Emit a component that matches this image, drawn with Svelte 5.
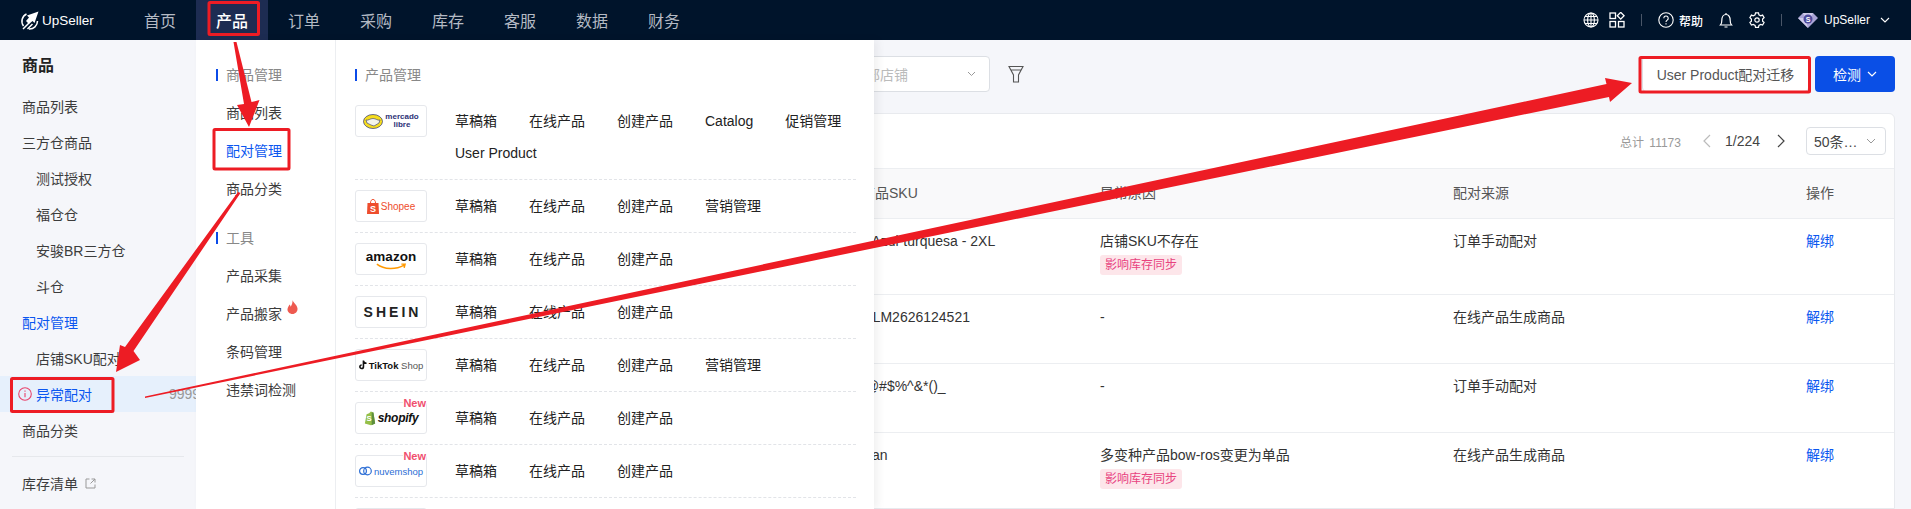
<script>
	const nav = ["首页", "产品", "订单", "采购", "库存", "客服", "数据", "财务"];

	const side = [
		{ label: "商品列表" },
		{ label: "三方仓商品" },
		{ label: "测试授权", sub: true },
		{ label: "福仓仓", sub: true },
		{ label: "安骏BR三方仓", sub: true },
		{ label: "斗仓", sub: true },
		{ label: "配对管理", blue: true },
		{ label: "店铺SKU配对", sub: true },
		{ label: "异常配对", sub: true, active: true },
		{ label: "商品分类" }
	];

	const base = ["草稿箱", "在线产品", "创建产品"];
	const platforms = [
		{ id: "mercado", links: [...base, "Catalog", "促销管理", "User Product"] },
		{ id: "shopee", links: [...base, "营销管理"] },
		{ id: "amazon", links: base },
		{ id: "shein", links: base },
		{ id: "tiktok", links: [...base, "营销管理"] },
		{ id: "shopify", links: base, isNew: true },
		{ id: "nuvem", links: base, isNew: true },
		{ id: "more", links: [] }
	];

	const rows = [
		{ sku: "t^Azul-turquesa - 2XL", reason: "店铺SKU不存在", tag: true, source: "订单手动配对" },
		{ sku: "MLM2626124521", reason: "-", source: "在线产品生成商品" },
		{ sku: "!@#$%^&*()_", reason: "-", source: "订单手动配对" },
		{ sku: "Ivan", reason: "多变种产品bow-ros变更为单品", tag: true, source: "在线产品生成商品" }
	];
</script>

<div class="page">
	<header class="topbar">
		<div class="logo">
			<svg width="19" height="19" viewBox="0 0 19 19" fill="none" stroke="#fff">
				<path d="M6.500 3A8 8 0 0 0 3.500 15" stroke-width="1.500" />
				<path d="M9 18a8 8 0 0 0 8.500-8" stroke-width="1.500" />
				<path d="M18.500 .5 7 4.500l2 2-3 3.500 3 3 3.500-3 2 2z" fill="#fff" stroke="none" />
				<path d="M3 18l6-6M7.500 18l5-5" stroke-width="1.500" />
			</svg>
			<span>UpSeller</span>
		</div>
		<nav>
			{#each nav as item, i}
				<div class="nav-item" class:on={i === 1}>{item}</div>
			{/each}
		</nav>
		<div class="tools">
			<svg class="ico" viewBox="0 0 16 16" fill="none" stroke="#fff" stroke-width="1.100">
				<circle cx="8" cy="8" r="7" />
				<ellipse cx="8" cy="8" rx="3.400" ry="7" />
				<path d="M8 1v14M1 8h14M2 4.500h12M2 11.500h12" />
			</svg>
			<svg class="ico apps" viewBox="0 0 16 16" fill="none" stroke="#fff" stroke-width="1.300">
				<rect x="1" y="1" width="5.500" height="5.500" />
				<rect x="1" y="9.500" width="5.500" height="5.500" />
				<rect x="9.500" y="9.500" width="5.500" height="5.500" />
				<rect x="9.300" y="1.300" width="4.800" height="4.800" transform="rotate(45 11.700 3.700)" />
			</svg>
			<i class="sep"></i>
			<svg class="ico" viewBox="0 0 16 16" fill="none" stroke="#fff" stroke-width="1.100">
				<circle cx="8" cy="8" r="7.200" />
				<path d="M5.800 6.200a2.200 2.200 0 1 1 3.400 1.900c-.8.500-1.200 1-1.200 1.900M8 11.300v1.200" />
			</svg>
			<span class="help">帮助</span>
			<svg class="ico bell" viewBox="0 0 16 16" fill="none" stroke="#fff" stroke-width="1.200">
				<path d="M2.500 13c1-1 1.300-2 1.300-4.500C3.800 5 5.500 2.500 8 2.500s4.200 2.500 4.200 6c0 2.500.3 3.500 1.300 4.500zM6.500 15h3M8 1v1.500" />
			</svg>
			<svg class="ico gear" viewBox="0 0 16 16" fill="none" stroke="#fff" stroke-width="1.200">
				<path d="M6.500 1.200h3l.4 2 1.800 1 1.900-.7 1.500 2.600-1.500 1.300v2.200l1.500 1.300-1.500 2.600-1.900-.7-1.800 1-.4 2h-3l-.4-2-1.800-1-1.900.7-1.500-2.600 1.500-1.300V7.400L.9 6.100l1.500-2.600 1.900.7 1.800-1z" transform="translate(0 -.4)" />
				<circle cx="8" cy="8" r="2.200" />
			</svg>
			<i class="sep second"></i>
			<svg class="gem" width="20" height="16" viewBox="0 0 20 16">
				<path d="M5 1h10l5 5-10 10L0 6z" fill="#a9a4d6" />
				<path d="M5 1h10l-2 5H7zM0 6h7l3 10z" fill="#cfcbea" />
				<circle cx="10" cy="7" r="4.500" fill="#4d4a9c" />
				<text x="10" y="9.500" class="gem-s">S</text>
			</svg>
			<span class="user">UpSeller</span>
			<svg class="chev" width="10" height="6" viewBox="0 0 10 6" fill="none" stroke="#fff" stroke-width="1.100"><path d="M1 1l4 4 4-4" /></svg>
		</div>
	</header>

	<div class="body">
		<aside class="sidebar">
			<div class="side-title">商品</div>
			{#each side as item}
				<div class="side-item" class:sub={item.sub} class:blue={item.blue} class:active={item.active}>
					{#if item.active}
						<svg class="info" width="14" height="14" viewBox="0 0 14 14" fill="none" stroke="#e8436b" stroke-width="1.100">
							<circle cx="7" cy="7" r="6.300" />
							<path d="M7 6v4.300M7 3.500v1.200" />
						</svg>
					{/if}
					<span>{item.label}</span>
					{#if item.active}<span class="count">9999+</span>{/if}
				</div>
			{/each}
			<div class="side-rule"></div>
			<div class="side-item stock">
				<span>库存清单</span>
				<svg width="11" height="11" viewBox="0 0 11 11" fill="none" stroke="#999" stroke-width="1"><path d="M4.500 1H1v9h9V6.500M6.500 1H10v3.500M10 1 5.500 5.500" /></svg>
			</div>
		</aside>

		<main class="main">
			<div class="toolbar">
				<div class="filters">
					<div class="select">
						<span>全部店铺</span>
						<svg width="9" height="6" viewBox="0 0 9 6" fill="none" stroke="#999" stroke-width="1"><path d="M1 1l3.500 3.500L8 1" /></svg>
					</div>
				</div>
				<svg class="funnel" width="16" height="18" viewBox="0 0 16 18" fill="none" stroke="#555" stroke-width="1.100">
					<path d="M1 1.500h14l-4.500 8.500v7h-5v-7zM3 5h10" />
				</svg>
				<button class="btn plain">User Product配对迁移</button>
				<button class="btn primary">
					检测
					<svg width="10" height="6" viewBox="0 0 10 6" fill="none" stroke="#fff" stroke-width="1.200"><path d="M1 1l4 4 4-4" /></svg>
				</button>
			</div>

			<section class="card">
				<div class="pager">
					<span class="total">总计 11173</span>
					<svg class="arrow" width="8" height="14" viewBox="0 0 8 14" fill="none" stroke="#bbb" stroke-width="1.200"><path d="M7 1 1 7l6 6" /></svg>
					<span class="pages">1/224</span>
					<svg class="arrow" width="8" height="14" viewBox="0 0 8 14" fill="none" stroke="#444" stroke-width="1.200"><path d="M1 1l6 6-6 6" /></svg>
					<div class="size">
						<span>50条…</span>
						<svg width="10" height="6" viewBox="0 0 10 6" fill="none" stroke="#999" stroke-width="1"><path d="M1 1l4 4 4-4" /></svg>
					</div>
				</div>
				<div class="row head">
					<div></div>
					<div>商品SKU</div>
					<div>异常原因</div>
					<div>配对来源</div>
					<div>操作</div>
				</div>
				{#each rows as row}
					<div class="row" class:tagged={row.tag}>
						<div></div>
						<div>{row.sku}</div>
						<div>
							{row.reason}
							{#if row.tag}<div class="tag">影响库存同步</div>{/if}
						</div>
						<div>{row.source}</div>
						<div class="unbind">解绑</div>
					</div>
				{/each}
			</section>
		</main>
	</div>

	<!-- open 产品 menu -->
	<div class="menu">
		<div class="menu-left">
			<div class="menu-title">商品管理</div>
			<div class="menu-link">商品列表</div>
			<div class="menu-link blue">配对管理</div>
			<div class="menu-link">商品分类</div>
			<div class="menu-title tools-title">工具</div>
			<div class="menu-link">产品采集</div>
			<div class="menu-link">
				产品搬家
				<svg class="fire" width="11" height="14" viewBox="0 0 11 14"><path d="M5.500 0c.5 2.500 4.500 4.500 5 8.500.3 3-2.200 5.500-5 5.500S.2 11.800.5 9C.8 7 2 6 2.500 4.500c.8.800 1 1.500 1.200 2.200C4.800 5 5.800 2.500 5.500 0z" fill="#ee5a50" /></svg>
			</div>
			<div class="menu-link">条码管理</div>
			<div class="menu-link">违禁词检测</div>
		</div>
		<div class="menu-right">
			<div class="menu-title">产品管理</div>
			{#each platforms as p}
				<div class="platform">
					<div class="brand">
						{#if p.isNew}<span class="new">New</span>{/if}
						{#if p.id === "mercado"}
							<svg width="20" height="15" viewBox="0 0 20 15">
								<ellipse cx="10" cy="7.500" rx="9.500" ry="7" fill="#f5dc1e" stroke="#2d3277" stroke-width=".7" />
								<path d="M3 6c2.500 .8 4-1.500 7-1.500s4.500 2.300 7 1.500l-1 3-5 3-3-1-4-2z" fill="#f4f4ea" stroke="#2d3277" stroke-width=".6" />
							</svg>
							<span class="b-mercado">mercado<br />libre</span>
						{:else if p.id === "shopee"}
							<svg width="12" height="15" viewBox="0 0 12 15">
								<path d="M.5 4h11l.5 11H0z" fill="#ee4d2d" />
								<path d="M3.500 4c0-4.800 5-4.800 5 0" fill="none" stroke="#ee4d2d" stroke-width="1" />
								<text x="6" y="12.500" class="b-shopee-s">S</text>
							</svg>
							<span class="b-shopee">Shopee</span>
						{:else if p.id === "amazon"}
							<span class="b-amazon">
								amazon
								<svg width="32" height="7" viewBox="0 0 34 7" fill="none" stroke="#f90" stroke-width="1.500"><path d="M2 1c8 6 20 6 29 1M28 1l4 0-1 4" /></svg>
							</span>
						{:else if p.id === "shein"}
							<span class="b-shein">SHEIN</span>
						{:else if p.id === "tiktok"}
							<svg width="8" height="10" viewBox="0 0 9 11" fill="none" stroke="#111" stroke-width="1.800"><path d="M5 .5v7a2 2 0 1 1-2-2M5 1c.3 1.500 1.500 2.500 3.500 2.500" /></svg>
							<span class="b-tiktok">TikTok <em>Shop</em></span>
						{:else if p.id === "shopify"}
							<svg width="12" height="16" viewBox="0 0 14 17">
								<path d="M1 15 3 4l3-1 2-2 3 1 2 13-5 2z" fill="#95bf47" />
								<path d="M9 2l2 0 2 13-4 2z" fill="#5e8e3e" />
								<text x="6" y="12" class="b-shopify-s">S</text>
							</svg>
							<span class="b-shopify">shopify</span>
						{:else if p.id === "nuvem"}
							<svg width="13" height="12" viewBox="0 0 13 12" fill="none" stroke="#2c6ed5" stroke-width="1.200">
								<circle cx="4" cy="6" r="3.400" />
								<circle cx="8.500" cy="6" r="3.800" />
							</svg>
							<span class="b-nuvem">nuvemshop</span>
						{/if}
					</div>
					<div class="links">
						{#each p.links as link}<span>{link}</span>{/each}
					</div>
				</div>
			{/each}
		</div>
	</div>

	<!-- red annotations drawn on top of the screenshot -->
	<svg class="marks" width="1911" height="509" viewBox="0 0 1911 509" fill="none">
		<g stroke="#ed1c24" stroke-width="3">
			<rect x="209" y="2.500" width="49.500" height="32" rx="1" />
			<rect x="214" y="129.500" width="75" height="39.500" rx="1" />
			<rect x="11.500" y="378.500" width="101.500" height="33" rx="1" />
			<rect x="1640" y="57.500" width="169.500" height="34.500" rx="1" />
		</g>
		<g fill="#ed1c24">
			<polygon points="233.500,42 236.500,42 251.500,102 259.500,100 249,127 237,105 244,104" />
			<polygon points="238,192 240.500,193 133.500,351 140,360 116,372 120,345 125,347" />
			<polygon points="145,396.500 145,398 1609,97 1610,102 1632,83 1605,78 1606.500,84" />
		</g>
	</svg>
</div>

<style>
	:global(body) {
		margin: 0;
		overflow: hidden;
	}

	.page {
		position: relative;
		width: 1911px;
		height: 509px;
		overflow: hidden;
		display: flex;
		flex-direction: column;
		font-family: "Liberation Sans", "Noto Sans CJK SC", sans-serif;
		font-size: 14px;
		color: #333;
	}

	.topbar {
		flex: none;
		height: 40px;
		display: flex;
		align-items: center;
		background: #00142b;
		color: #fff;
	}

	.logo {
		width: 124px;
		padding-left: 20px;
		box-sizing: border-box;
		display: flex;
		align-items: center;
		gap: 3px;
		font-size: 13.500px;
	}

	nav {
		display: flex;
		height: 100%;
	}

	.nav-item {
		width: 72px;
		display: flex;
		align-items: center;
		justify-content: center;
		font-size: 16px;
		color: #b4bac4;
	}

	.nav-item.on {
		background: #1d2c52;
		color: #fff;
		font-weight: 500;
	}

	.tools {
		margin-left: auto;
		display: flex;
		align-items: center;
		padding-right: 21px;
	}

	.ico {
		width: 16px;
		height: 16px;
	}

	.apps {
		margin-left: 10px;
	}

	.sep {
		width: 1px;
		height: 12px;
		background: #4a5668;
		margin: 0 16px 0 16px;
	}

	.help {
		font-size: 12px;
		font-weight: 500;
		margin: 0 15px 0 5px;
	}

	.gear {
		margin-left: 15px;
	}

	.sep.second {
		margin: 0 16px 0 16px;
	}

	.gem-s {
		font-size: 7px;
		font-weight: 700;
		fill: #fff;
		text-anchor: middle;
	}

	.user {
		font-size: 12px;
		margin: 0 10px 0 6px;
	}

	.body {
		flex: 1;
		display: flex;
		min-height: 0;
	}

	.sidebar {
		flex: none;
		width: 196px;
		background: #f5f6fa;
		padding-top: 8px;
		box-sizing: border-box;
	}

	.side-title {
		height: 36px;
		line-height: 36px;
		padding-left: 22px;
		margin-bottom: 4px;
		font-size: 16px;
		font-weight: 700;
		color: #222;
	}

	.side-item {
		height: 36px;
		display: flex;
		align-items: center;
		padding-left: 22px;
		white-space: nowrap;
		color: #3c3c3c;
	}

	.side-item.sub {
		padding-left: 36px;
	}

	.side-item.blue {
		color: #0b57f0;
	}

	.side-item.active {
		position: relative;
		background: #e6f0fc;
		color: #0b57f0;
	}

	.info {
		position: absolute;
		left: 18px;
	}

	.count {
		margin-left: 77px;
		color: #999;
	}

	.side-rule {
		height: 1px;
		margin: 8px 12px;
		background: #e6e8ec;
	}

	.stock svg {
		margin-left: 7px;
	}

	.main {
		flex: 1;
		min-width: 0;
		background: #f5f6fa;
		padding: 16px 16px 0;
	}

	.toolbar {
		height: 36px;
		display: flex;
		align-items: center;
	}

	.filters {
		width: 778px;
		display: flex;
		justify-content: flex-end;
	}

	.select {
		width: 151px;
		height: 36px;
		box-sizing: border-box;
		border: 1px solid #dcdfe4;
		border-radius: 4px;
		background: #fff;
		display: flex;
		align-items: center;
		justify-content: space-between;
		padding: 0 13px 0 12px;
		color: #bbb;
	}

	.funnel {
		margin-left: 18px;
	}

	.btn {
		height: 36px;
		border-radius: 4px;
		font: inherit;
		display: flex;
		align-items: center;
		justify-content: center;
		gap: 6px;
	}

	.plain {
		margin-left: auto;
		width: 167px;
		background: #fff;
		border: 1px solid #dcdfe4;
		color: #555;
	}

	.primary {
		margin-left: 6px;
		width: 80px;
		background: #0a4fe6;
		border: 0;
		color: #fff;
	}

	.card {
		margin-top: 21px;
		background: #fff;
		border: 1px solid #e8eaee;
		border-radius: 6px 6px 0 0;
	}

	.pager {
		height: 54px;
		display: flex;
		align-items: center;
		justify-content: flex-end;
		padding-right: 8px;
		color: #444;
	}

	.total {
		font-size: 12px;
		word-spacing: 2px;
		color: #999;
	}

	.pager .arrow {
		margin: 0 1px;
	}

	.pager .arrow:first-of-type {
		margin-left: 22px;
	}

	.pages {
		margin: 0 16px 0 13px;
	}

	.size {
		width: 80px;
		height: 28px;
		margin-left: 20px;
		box-sizing: border-box;
		border: 1px solid #dcdfe4;
		border-radius: 4px;
		display: flex;
		align-items: center;
		justify-content: space-between;
		padding: 0 9px 0 7px;
	}

	.row {
		display: grid;
		grid-template-columns: 632px 239px 353px 353px 1fr;
		min-height: 69px;
		box-sizing: border-box;
		border-top: 1px solid #eceef1;
	}

	.row > div {
		padding: 12px 0 0 16px;
		line-height: 20px;
		font-size: 14px;
		color: #333;
	}

	.row.tagged {
		min-height: 76px;
	}

	.row.head {
		min-height: 50px;
		background: #f9f9fa;
	}

	.row.head > div {
		padding-top: 14px;
		color: #555;
	}

	.tag {
		width: fit-content;
		margin-top: 4px;
		padding: 0 5px;
		height: 20px;
		line-height: 20px;
		border-radius: 3px;
		background: #fde6ea;
		color: #e8437f;
		font-size: 12px;
	}

	.row > .unbind {
		color: #0b57f0;
	}

	.menu {
		position: absolute;
		left: 196px;
		top: 40px;
		bottom: 0;
		width: 678px;
		display: flex;
		background: #fff;
		box-shadow: 4px 0 8px rgba(0, 0, 0, 0.06);
	}

	.menu-left {
		width: 140px;
		flex: none;
		box-sizing: border-box;
		padding: 16px 0 0 30px;
		border-right: 1px solid #eceef1;
	}

	.menu-title {
		position: relative;
		height: 38px;
		line-height: 38px;
		color: #888;
	}

	.menu-title::before {
		content: "";
		position: absolute;
		left: -10px;
		top: 13px;
		width: 2px;
		height: 12px;
		background: #0b4be8;
	}

	.tools-title {
		margin-top: 11px;
	}

	.menu-link {
		position: relative;
		height: 38px;
		line-height: 38px;
		color: #3c3c3c;
	}

	.menu-link.blue {
		color: #0b57f0;
	}

	.fire {
		position: absolute;
		left: 61px;
		top: 5px;
	}

	.menu-right {
		flex: 1;
		box-sizing: border-box;
		padding: 16px 18px 0 19px;
		min-width: 0;
	}

	.menu-right > .menu-title {
		margin: 0 0 1px 10px;
	}

	.platform {
		display: flex;
		padding: 10px 0;
		border-bottom: 1px dashed #e2e4e8;
	}

	.brand {
		position: relative;
		flex: none;
		width: 72px;
		height: 32px;
		margin-right: 28px;
		box-sizing: border-box;
		border: 1px solid #e6e8ec;
		border-radius: 3px;
		display: flex;
		align-items: center;
		justify-content: center;
		gap: 2px;
	}

	.new {
		position: absolute;
		right: 0;
		top: -7px;
		font-size: 11px;
		line-height: 14px;
		font-weight: 700;
		color: #f0506e;
		background: #fff;
	}

	.links {
		flex: 1;
		display: flex;
		flex-wrap: wrap;
		column-gap: 32px;
	}

	.links span {
		height: 32px;
		line-height: 32px;
		color: #222;
	}

	.b-mercado {
		font-size: 8px;
		line-height: 8px;
		font-weight: 700;
		color: #2d3277;
		text-align: center;
	}

	.b-shopee {
		font-size: 10px;
		color: #ee4d2d;
	}

	.b-shopee-s {
		font-size: 9px;
		font-weight: 700;
		fill: #fff;
		text-anchor: middle;
	}

	.b-amazon {
		display: flex;
		flex-direction: column;
		align-items: center;
		font-size: 13.500px;
		line-height: 12px;
		font-weight: 700;
		color: #111;
		margin-top: 2px;
	}

	.b-shein {
		font-size: 14px;
		font-weight: 700;
		letter-spacing: 3px;
		color: #222;
		margin-right: -3px;
	}

	.b-tiktok {
		font-size: 9.500px;
		font-weight: 700;
		color: #111;
	}

	.b-tiktok em {
		font-style: normal;
		font-weight: 400;
		color: #555;
	}

	.b-shopify {
		font-size: 12px;
		font-style: italic;
		font-weight: 700;
		color: #111;
		letter-spacing: -0.3px;
	}

	.b-shopify-s {
		font-size: 9px;
		font-weight: 700;
		fill: #fff;
		text-anchor: middle;
	}

	.b-nuvem {
		font-size: 9.500px;
		color: #2c6ed5;
	}

	.marks {
		position: absolute;
		left: 0;
		top: 0;
		pointer-events: none;
	}
</style>
